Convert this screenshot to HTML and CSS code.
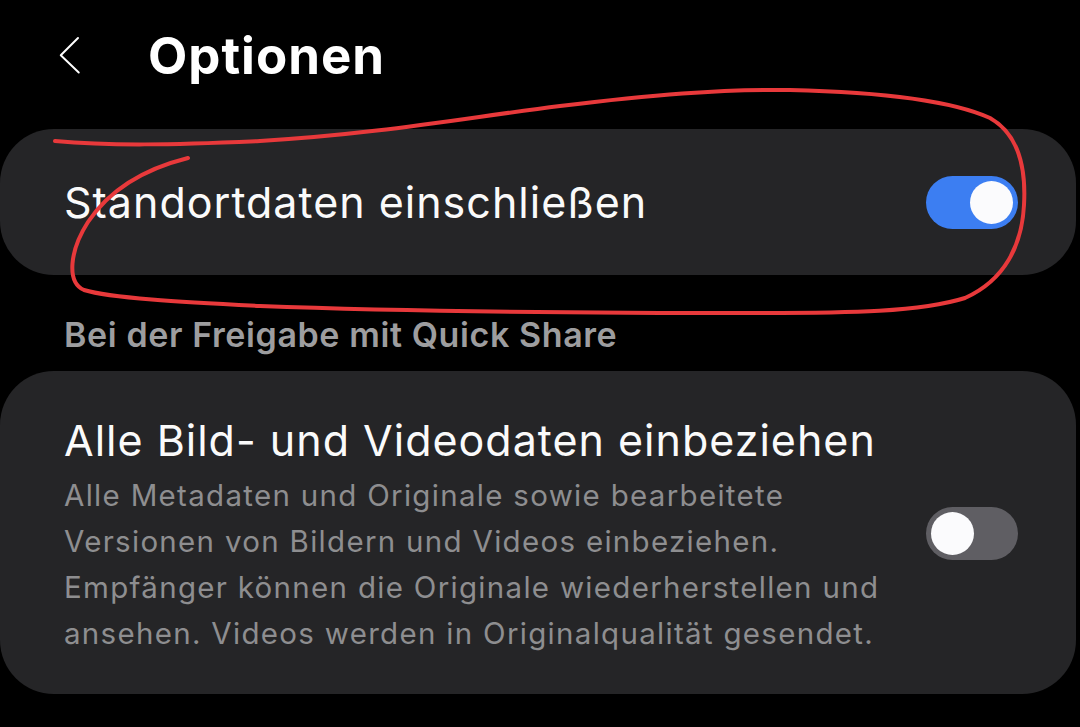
FILE: index.html
```html
<!DOCTYPE html>
<html lang="de">
<head>
    <meta charset="UTF-8">
    <title>Optionen</title>
    <link rel="stylesheet" href="styles.css">
</head>
<body>

<div class="appbar">
    <svg class="back" width="30" height="52" viewBox="50 30 40 52">
        <polyline points="82,32 59,55 83,78" fill="none" stroke="#fff" stroke-width="2.6" stroke-linecap="round" stroke-linejoin="round"/>
    </svg>
    <h1 class="title">Optionen</h1>
</div>

<div class="card single">
    <span class="item-title">Standortdaten einschließen</span>
    <div class="switch on"><div class="knob"></div></div>
</div>

<div class="section-label">Bei der Freigabe mit Quick Share</div>

<div class="card">
    <div class="item-text">
        <div class="item-title">Alle Bild- und Videodaten einbeziehen</div>
        <div class="item-desc">
            Alle Metadaten und Originale sowie bearbeitete<br>
            Versionen von Bildern und Videos einbeziehen.<br>
            Empfänger können die Originale wiederherstellen und<br>
            ansehen. Videos werden in Originalqualität gesendet.
        </div>
    </div>
    <div class="switch off"><div class="knob"></div></div>
</div>

<!-- red marker circle drawn over the screenshot -->
<svg class="scribble" width="1080" height="727" viewBox="0 0 1080 727">
    <path d="M55,141 C110,146 170,145 260,141 C380,134 470,117 560,106 C650,95 720,89 790,90 C880,92 950,100 990,118 C1020,135 1026,170 1024,205 C1022,245 1005,280 965,298 C920,312 850,313 760,313 C620,313 420,312 260,306 C180,302 110,298 84,290 C66,282 70,250 88,222 C108,192 140,170 188,158"
          fill="none" stroke="#e8393b" stroke-width="4" stroke-linecap="round" stroke-linejoin="round"/>
</svg>

</body>
</html>
```

FILE: styles.css
```css
body {
  margin: 0;
  background: #000;
  color: #fff;
  font-family: Inter, "Open Sans", Arial, sans-serif;
  position: relative;
  height: 727px;
  overflow: hidden;
}
.appbar {
  display: flex;
  align-items: center;
  padding: 30px 0 0 54px;
  height: 51px;
}
.back {
  display: block;
}
.title {
  margin: 0 0 0 64px;
  font-size: 51px;
  font-weight: 700;
  letter-spacing: 1px;
  line-height: 51px;
}
.card {
  background: #252527;
  border-radius: 54px;
  margin: 0 4px 0 0;
  padding: 39px 58px 38px 64px;
  display: flex;
  align-items: center;
  justify-content: space-between;
}
.card.single {
  margin-top: 48px;
  height: 146px;
  padding-top: 0;
  padding-bottom: 0;
  box-sizing: border-box;
}
.item-title {
  font-size: 43px;
  line-height: 60px;
  letter-spacing: 1px;
  color: #fafafa;
}
.item-desc {
  margin-top: 2px;
  font-size: 29.5px;
  line-height: 46px;
  letter-spacing: 1.3px;
  color: #8e8e90;
}
.section-label {
  padding: 38px 0 15px 64px;
  font-size: 34px;
  font-weight: 600;
  letter-spacing: 0.6px;
  color: #9d9d9f;
  line-height: 43px;
}
.switch {
  width: 92px;
  height: 53px;
  border-radius: 27px;
  flex-shrink: 0;
  display: flex;
  align-items: center;
  padding: 0 5px;
  box-sizing: border-box;
}
.switch.on {
  background: #3c7ef2;
  justify-content: flex-end;
}
.switch.off {
  background: #5f5e63;
  justify-content: flex-start;
}
.knob {
  width: 43px;
  height: 43px;
  border-radius: 50%;
  background: #fbfbfd;
}
.scribble {
  position: absolute;
  left: 0;
  top: 0;
  pointer-events: none;
}
```
